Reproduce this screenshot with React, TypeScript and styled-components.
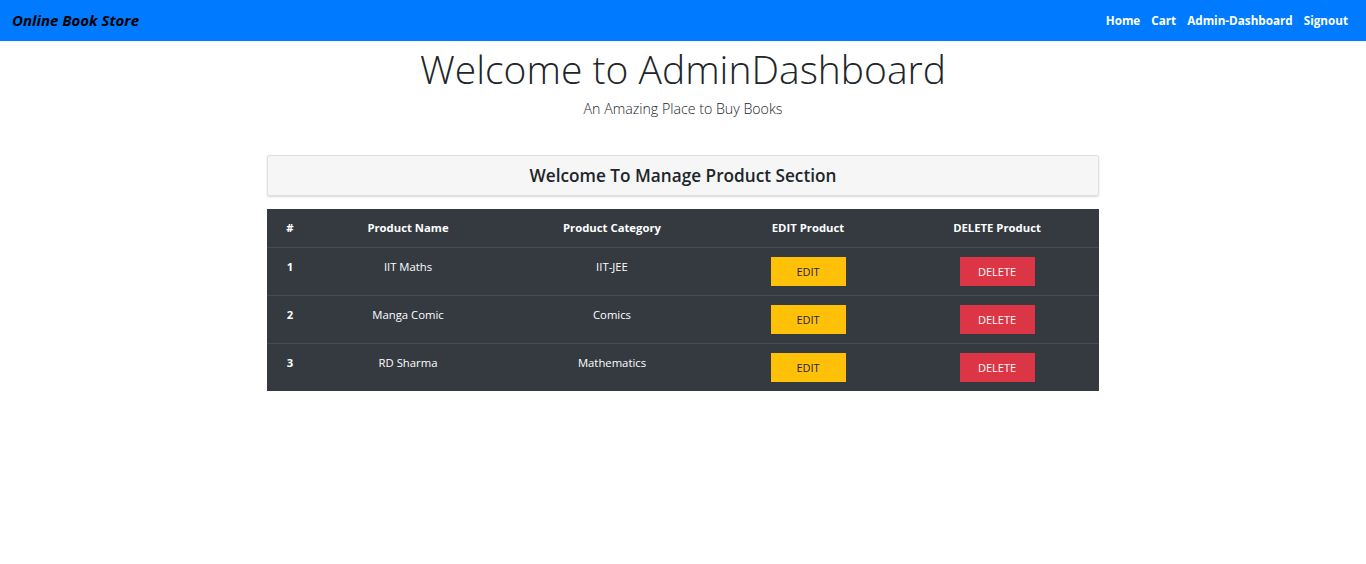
import React from "react";
import styled, { createGlobalStyle } from "styled-components";

const Global = createGlobalStyle`
  html, body { margin: 0; padding: 0; background: #fff; }
  body { font-family: "Open Sans", "Noto Sans", sans-serif; color: #212529; }
  * { box-sizing: border-box; }
`;

const Navbar = styled.nav`
  height: 41px;
  background: #007bff;
  display: flex;
  align-items: center;
  justify-content: space-between;
  padding: 0 18px 2px 12px;
`;

const Brand = styled.span`
  font-size: 15px;
  font-weight: 700;
  font-style: italic;
  color: #000;
`;

const NavLinks = styled.div`
  display: flex;
  gap: 11px;
`;

const NavLink = styled.a`
  color: #fff;
  font-size: 11.7px;
  font-weight: 700;
  text-decoration: none;
`;

const Hero = styled.header`
  display: flex;
  flex-direction: column;
  align-items: center;
  padding-top: 2px;
`;

const Title = styled.h1`
  margin: 0;
  font-size: 39px;
  font-weight: 300;
  line-height: 52px;
  color: #212529;
`;

const Subtitle = styled.p`
  margin: 4px 0 0;
  font-size: 14.2px;
  font-weight: 300;
  line-height: 20px;
`;

const Section = styled.main`
  width: 832px;
  margin: 36px auto 0;
  display: flex;
  flex-direction: column;
  gap: 13px;
`;

const SectionHead = styled.div`
  height: 41px;
  background: #f6f6f6;
  border: 1px solid #e0e0e0;
  border-radius: 2px;
  box-shadow: 0 1px 2px rgba(0, 0, 0, 0.15);
  display: flex;
  align-items: center;
  justify-content: center;
  font-size: 17.2px;
  font-weight: 600;
  color: #212529;
`;

const Table = styled.table`
  width: 100%;
  border-collapse: collapse;
  background: #343a40;
  color: #fff;
  table-layout: fixed;
  font-size: 11.3px;
`;

const Th = styled.th<{ $w: number }>`
  width: ${(p) => p.$w}px;
  padding: 10px 6px;
  line-height: 18px;
  font-weight: 700;
  text-align: center;
`;

const Row = styled.tr`
  border-top: 1px solid #454d55;
`;

const Td = styled.td<{ $bold?: boolean }>`
  padding: 10px 6px 9px;
  line-height: 18px;
  text-align: center;
  vertical-align: top;
  font-weight: ${(p) => (p.$bold ? 700 : 400)};
`;

const Btn = styled.button<{ $variant: "edit" | "delete" }>`
  display: block;
  margin: -1px auto 0;
  width: 75px;
  height: 29px;
  border: none;
  border-radius: 0;
  font-family: inherit;
  font-size: 11px;
  background: ${(p) => (p.$variant === "edit" ? "#ffc107" : "#dc3545")};
  color: ${(p) => (p.$variant === "edit" ? "#212529" : "#fff")};
`;

const products = [
  { id: 1, name: "IIT Maths", category: "IIT-JEE" },
  { id: 2, name: "Manga Comic", category: "Comics" },
  { id: 3, name: "RD Sharma", category: "Mathematics" },
];

export default function App() {
  return (
    <>
      <Global />
      <Navbar>
        <Brand>Online Book Store</Brand>
        <NavLinks>
          <NavLink href="#">Home</NavLink>
          <NavLink href="#">Cart</NavLink>
          <NavLink href="#">Admin-Dashboard</NavLink>
          <NavLink href="#">Signout</NavLink>
        </NavLinks>
      </Navbar>
      <Hero>
        <Title>Welcome to AdminDashboard</Title>
        <Subtitle>An Amazing Place to Buy Books</Subtitle>
      </Hero>
      <Section>
        <SectionHead>Welcome To Manage Product Section</SectionHead>
        <Table>
          <thead>
            <tr>
              <Th $w={46}>#</Th>
              <Th $w={190}>Product Name</Th>
              <Th $w={218}>Product Category</Th>
              <Th $w={174}>EDIT Product</Th>
              <Th $w={204}>DELETE Product</Th>
            </tr>
          </thead>
          <tbody>
            {products.map((p) => (
              <Row key={p.id}>
                <Td $bold>{p.id}</Td>
                <Td>{p.name}</Td>
                <Td>{p.category}</Td>
                <Td>
                  <Btn $variant="edit">EDIT</Btn>
                </Td>
                <Td>
                  <Btn $variant="delete">DELETE</Btn>
                </Td>
              </Row>
            ))}
          </tbody>
        </Table>
      </Section>
    </>
  );
}
